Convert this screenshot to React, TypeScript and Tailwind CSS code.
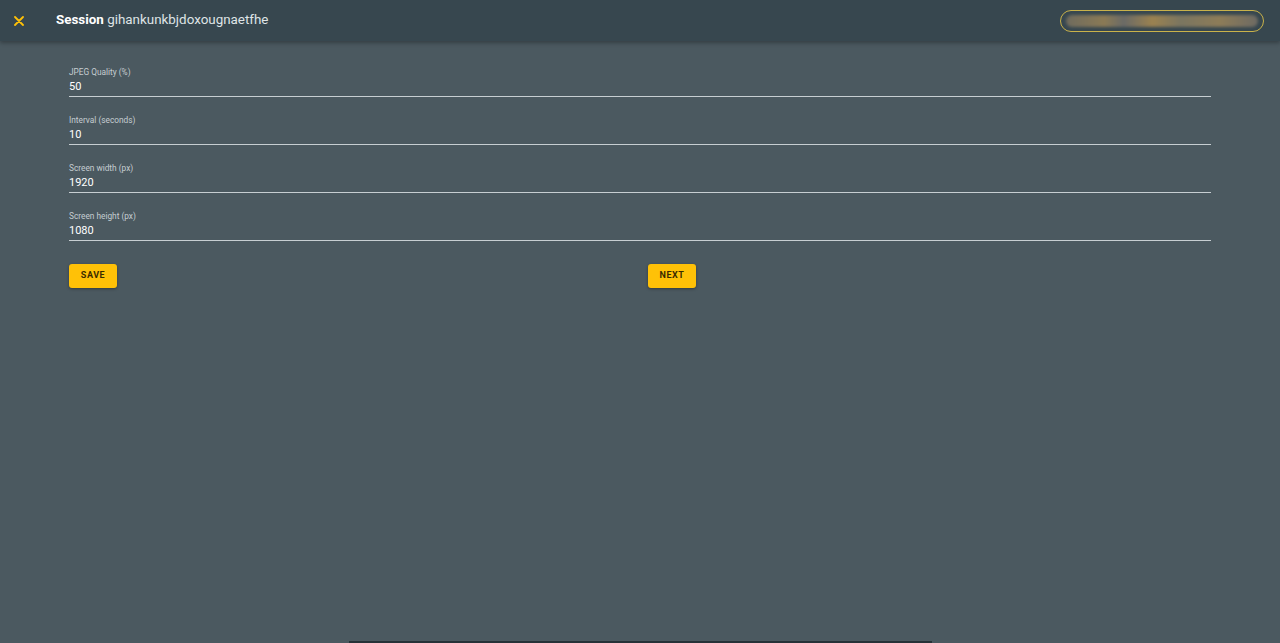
import React from "react";

const fields = [
  { label: "JPEG Quality (%)", value: "50" },
  { label: "Interval (seconds)", value: "10" },
  { label: "Screen width (px)", value: "1920" },
  { label: "Screen height (px)", value: "1080" },
];

export default function App() {
  return (
    <div
      className="relative flex h-[643px] w-full flex-col overflow-hidden bg-[#4b5960]"
      style={{ fontFamily: "Roboto, 'Liberation Sans', sans-serif" }}
    >
      <header className="relative z-10 flex h-[41px] shrink-0 items-center bg-[#37474f] shadow-[0_2px_4px_rgba(0,0,0,0.3)]">
        <div className="flex w-[37px] justify-center pl-[1px]">
          <svg width="10" height="10" viewBox="0 0 10 10">
            <path d="M1 1L9 9M9 1L1 9" stroke="#ffc107" strokeWidth="1.8" strokeLinecap="round" />
          </svg>
        </div>
        <div className="ml-[19px] text-[13.4px] text-white">
          <span className="font-bold">Session</span>{" "}
          <span className="text-[#dfe4e6]">gihankunkbjdoxougnaetfhe</span>
        </div>
        <div className="ml-auto mr-[16px] flex h-[22px] w-[204px] items-center rounded-full border border-[#c9b24a] px-[5px]">
          <div className="h-[12px] w-full rounded-full bg-[linear-gradient(90deg,#6f6b5e_0%,#8a7a55_20%,#6a6a66_30%,#9a8250_45%,#7a7560_60%,#8d7c58_80%,#6d6a63_100%)] blur-[1.5px]" />
        </div>
      </header>

      <main className="flex-1 px-[69px] pt-[26px] pr-[69px]">
        <div className="w-[1142px]">
          {fields.map((f) => (
            <div key={f.label} className="mb-[18px] border-b border-[#c7ced2] pb-[2px]">
              <div className="text-[8.3px] leading-[10px] text-[#c5cdd1]">{f.label}</div>
              <div className="mt-[3px] text-[11px] leading-[14px] text-white">{f.value}</div>
            </div>
          ))}
          <div className="mt-[20px] grid grid-cols-2 gap-[16px]">
            <div>
              <button className="h-[24px] w-[48px] rounded-[3px] bg-[#ffc107] text-[9px] font-bold tracking-[0.06em] text-[#3a2c00] shadow-[0_1px_3px_rgba(0,0,0,0.35)]">
                SAVE
              </button>
            </div>
            <div>
              <button className="h-[24px] w-[48px] rounded-[3px] bg-[#ffc107] text-[9px] font-bold tracking-[0.06em] text-[#3a2c00] shadow-[0_1px_3px_rgba(0,0,0,0.35)]">
                NEXT
              </button>
            </div>
          </div>
        </div>
      </main>

      <div className="flex justify-center">
        <div className="h-[2px] w-[583px] bg-[#263238]" />
      </div>
    </div>
  );
}
